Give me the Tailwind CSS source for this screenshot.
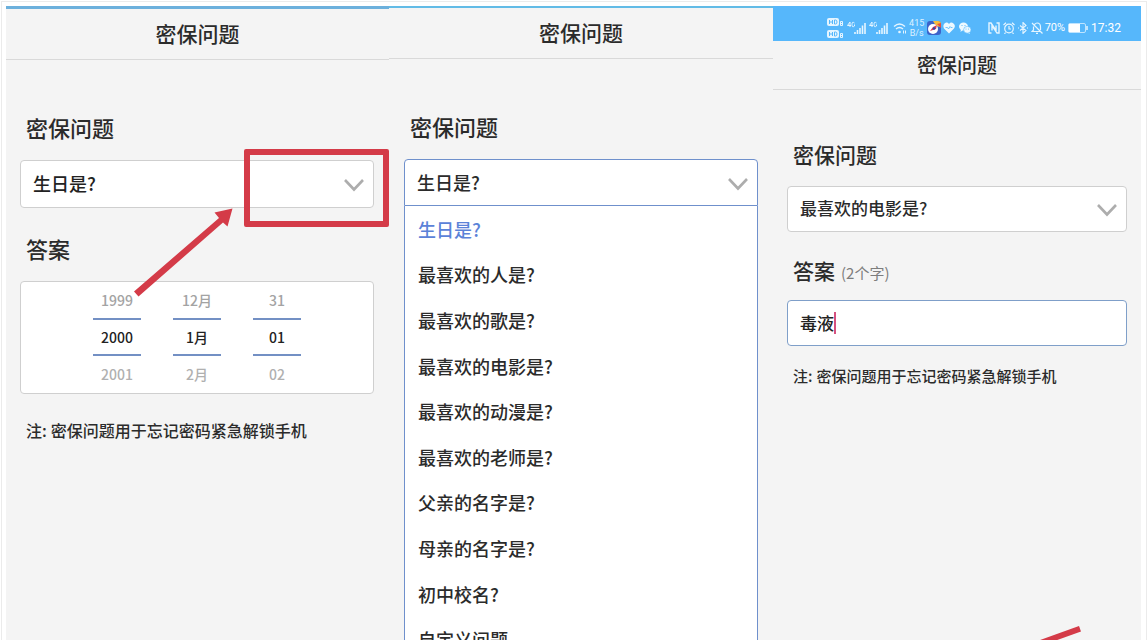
<!DOCTYPE html>
<html lang="zh-CN">
<head>
<meta charset="utf-8">
<meta name="viewport" content="width=device-width, initial-scale=1">
<title>密保问题</title>
<script src="https://cdn.jsdelivr.net/npm/@tailwindcss/browser@4"></script>
</head>
<body class="h-screen overflow-hidden bg-white font-['Noto_Sans_CJK_SC',sans-serif] font-medium text-[#2b2b2b]">
<div class="mx-px mt-px h-full border-x border-t border-[#ebebeb] pt-1 pr-[5px] pl-1">
  <main class="grid h-full grid-cols-[383fr_384fr_368fr] bg-[#f4f4f4]">

    <!-- Step 1: birthday question with date picker -->
    <section class="relative border-t-3 border-[#6cb0dc]">
      <header class="flex h-[51px] items-center justify-center border-b border-[#d9d9d9] pb-0.5">
        <h1 class="text-[21px] leading-8 font-medium">密保问题</h1>
      </header>
      <div class="pr-[15px] pl-3.5">
        <label for="q1" class="mt-[51px] block px-1.5 text-[22px] leading-8">密保问题</label>
        <div class="relative mt-[17px]">
          <select id="q1" class="block h-12 w-full appearance-none rounded-[4px] border border-[#cfcfcf] bg-white px-3 pb-0.5 text-lg text-[#222]"><option>生日是?</option></select>
          <svg class="pointer-events-none absolute top-[18px] right-2.5 h-3.5 w-5" viewBox="0 0 20 14" fill="none" stroke="#adadad" stroke-width="2.6" aria-hidden="true"><path d="M1 2l9 9.5L19 2"/></svg>
        </div>
        <h2 class="mt-6 px-1.5 text-[22px] leading-8 font-medium">答案</h2>
        <div class="mt-[17px] flex h-[113px] items-center justify-center gap-8 rounded-[4px] border border-[#cfcfcf] bg-white pb-0.5 text-center text-sm text-[#a3a3a3]">
          <div class="w-12"><div class="h-9 leading-9">1999</div><div class="h-[38px] border-y-2 border-[#7390c4] leading-[34px] text-[#222]">2000</div><div class="h-9 leading-9 text-[#b0b0b0]">2001</div></div>
          <div class="w-12"><div class="h-9 leading-9">12月</div><div class="h-[38px] border-y-2 border-[#7390c4] leading-[34px] text-[#222]">1月</div><div class="h-9 leading-9 text-[#b0b0b0]">2月</div></div>
          <div class="w-12"><div class="h-9 leading-9">31</div><div class="h-[38px] border-y-2 border-[#7390c4] leading-[34px] text-[#222]">01</div><div class="h-9 leading-9 text-[#b0b0b0]">02</div></div>
        </div>
        <p class="mt-6 px-1.5 text-base leading-6">注:<span class="ml-1">密保问题用于忘记密码紧急解锁手机</span></p>
      </div>
      <!-- Red annotation -->
      <div class="absolute top-[140px] right-0 h-[78px] w-[145px] rounded-[2px] border-6 border-[#d43b48]"></div>
      <svg class="absolute top-[191px] left-[120px] h-[100px] w-[120px]" viewBox="0 0 120 100" fill="#d43b48" aria-hidden="true"><path d="M8 91.500L93 18 88.500 12.500 106.500 8.500 101.500 26.500 97 22.500 12.500 96.500z"/></svg>
    </section>

    <!-- Step 2: question list open -->
    <section class="border-t-2 border-[#62bbe6]">
      <header class="flex h-[51px] items-center justify-center border-b border-[#d9d9d9] pb-0.5">
        <h1 class="text-[21px] leading-8 font-medium">密保问题</h1>
      </header>
      <div class="px-[15px]">
        <label for="q2" class="mt-[51px] block px-1.5 text-[22px] leading-8">密保问题</label>
        <div class="relative mt-[17px]">
          <select id="q2" class="block h-[47px] w-full appearance-none rounded-t-[4px] border border-[#6f90cc] bg-white px-3 pb-0.5 text-lg"><option>生日是?</option></select>
          <svg class="pointer-events-none absolute top-[18px] right-2.5 h-3.5 w-5" viewBox="0 0 20 14" fill="none" stroke="#adadad" stroke-width="2.6" aria-hidden="true"><path d="M1 2l9 9.500L19 2"/></svg>
        </div>
        <ul class="grid h-[456px] auto-rows-fr border-x border-[#6f90cc] bg-white text-lg">
          <li class="flex"><button class="w-full px-[13px] text-left text-[#5b82d8]">生日是?</button></li>
          <li class="flex"><button class="w-full px-[13px] text-left">最喜欢的人是?</button></li>
          <li class="flex"><button class="w-full px-[13px] text-left">最喜欢的歌是?</button></li>
          <li class="flex"><button class="w-full px-[13px] text-left">最喜欢的电影是?</button></li>
          <li class="flex"><button class="w-full px-[13px] text-left">最喜欢的动漫是?</button></li>
          <li class="flex"><button class="w-full px-[13px] text-left">最喜欢的老师是?</button></li>
          <li class="flex"><button class="w-full px-[13px] text-left">父亲的名字是?</button></li>
          <li class="flex"><button class="w-full px-[13px] text-left">母亲的名字是?</button></li>
          <li class="flex"><button class="w-full px-[13px] text-left">初中校名?</button></li>
          <li class="flex"><button class="w-full px-[13px] text-left">自定义问题</button></li>
        </ul>
      </div>
    </section>

    <!-- Step 3: text answer -->
    <section class="relative">
      <div class="flex h-[35px] items-center justify-end bg-[#56b7fb] pt-2 pr-5 text-white">
        <svg class="h-[22px] w-[18px]" viewBox="0 0 18 22" aria-hidden="true"><rect y="1" width="12" height="8" rx="2" fill="#e5f5ff"/><rect y="13" width="12" height="8" rx="2" fill="#e5f5ff"/><g fill="none" stroke="#56b7fb"><path d="M2.500 3v4M5.500 3v4M2.500 5h3M7.500 3v4h1q1.500 0 1.500-2t-1.500-2zM2.500 15v4M5.500 15v4M2.500 17h3M7.500 15v4h1q1.500 0 1.500-2t-1.500-2z"/></g><g fill="none" stroke="#e5f5ff"><path d="M13.500 4.500v4h2v-4zM13.500 6.500h2M13.500 16.500v4h2v-4zM13.500 18.500h2"/></g></svg>
        <svg class="ml-0.5 h-4 w-5" viewBox="0 0 20 16" fill="none" stroke="#e5f5ff" aria-hidden="true"><path d="M3 7V2L.5 5.500H4M7.500 3Q5 1 5 4.500T7.500 6V4.500"/><path stroke-width="1.600" d="M8 14v-2M10.500 14v-4M13 14V8M15.500 14V5.500M18 14V3"/></svg>
        <svg class="ml-0.5 h-4 w-5" viewBox="0 0 20 16" fill="none" stroke="#e5f5ff" aria-hidden="true"><path d="M3 7V2L.5 5.500H4M7.500 3Q5 1 5 4.500T7.500 6V4.500"/><path stroke-width="1.600" d="M8 14v-2M10.500 14v-4M13 14V8M15.500 14V5.500M18 14V3"/></svg>
        <svg class="ml-1 h-3.5 w-3.5" viewBox="0 0 14 14" fill="none" stroke="#e5f5ff" stroke-width="1.400" aria-hidden="true"><path d="M1 5.500q5.500-5 11 0M3 8q3.500-3 7 0"/><circle cx="6.500" cy="11" r="1.300" fill="#e5f5ff" stroke="none"/><path stroke-width="1" d="M10.500 12.500V9.500M12.500 9.500v3"/></svg>
        <div class="ml-0.5 w-4 text-center font-[Roboto,sans-serif] text-[9px] leading-[10px] font-normal text-[#dff2ff]">415<br>B/s</div>
        <svg class="ml-0.5 h-3.5 w-3.5" viewBox="0 0 14 14" aria-hidden="true"><rect width="14" height="14" rx="3" fill="#3c62c9"/><path d="M6 0h5q3 0 3 3v3L9 5z" fill="#f6bd3e"/><path d="M10 3l4-1v5z" fill="#e7503f"/><circle cx="6" cy="8" r="5" fill="#fff"/><path d="M3 10l3-4 4-2-1 4-3 1z" fill="#d93c58"/><circle cx="7" cy="7.500" r="1.300" fill="#294aa9"/></svg>
        <svg class="ml-0.5 h-3 w-3" viewBox="0 0 12 12" aria-hidden="true"><path d="M6 11.500L1 6.500Q-.5 3.500 1.500 1.500 4-.5 6 2 8-.5 10.500 1.500T11 6.500z" fill="#edf9ff"/><path d="M2.500 5.500h2l1 1.500 1.500-2.500 .8 1h1.700" fill="none" stroke="#56b7fb" stroke-width=".8"/></svg>
        <svg class="ml-1 h-3 w-3" viewBox="0 0 12 12" aria-hidden="true"><ellipse cx="4.500" cy="4.500" rx="4.500" ry="4" fill="#edf9ff"/><path d="M1.500 10l.5-3 2 1zM10.500 12l.5-2-2 1z" fill="#edf9ff"/><ellipse cx="8.300" cy="7.800" rx="3.700" ry="3.400" fill="#edf9ff" stroke="#56b7fb" stroke-width=".6"/><g fill="#56b7fb"><circle cx="3" cy="3.500" r=".6"/><circle cx="6" cy="3.500" r=".6"/><circle cx="7" cy="7" r=".5"/><circle cx="9.500" cy="7" r=".5"/></g></svg>
        <svg class="ml-[17px] h-3 w-3" viewBox="0 0 12 12" fill="none" stroke="#e5f5ff" stroke-width="1.400" aria-hidden="true"><path d="M3.500 11H1V1h2l5 7.500V3.500M8.500 1H11v10H9L4 3.500v5"/></svg>
        <svg class="ml-[3px] h-3 w-3" viewBox="0 0 12 12" fill="none" stroke="#e5f5ff" stroke-width="1.200" aria-hidden="true"><circle cx="6" cy="6.500" r="4.300"/><path d="M6 4v3h2M.5 3L3 .8M11.500 3L9 .8M2.500 10.500L1.500 12M9.500 10.500l1 1.500"/></svg>
        <svg class="ml-0.5 h-3 w-3" viewBox="0 0 12 12" fill="none" stroke="#e5f5ff" stroke-width="1.100" aria-hidden="true"><path d="M3 3.500l6 5L6 11.500V.5l3 3-6 5M1 6h1M10 6h1"/></svg>
        <svg class="ml-0.5 h-3 w-3" viewBox="0 0 12 12" fill="none" stroke="#e5f5ff" stroke-width="1.200" aria-hidden="true"><path d="M1 1l10.500 10.500M3.500 2.500Q5 1 6 1q3.500 0 3.500 4v3M2.500 4.500V8L1 9.500h8M5 11.300h2"/></svg>
        <span class="ml-0.5 font-[Roboto,sans-serif] text-[11px] leading-4 font-normal">70%</span>
        <svg class="ml-[3px] h-2.5 w-5" viewBox="0 0 20 10" aria-hidden="true"><rect x=".5" y=".5" width="17" height="9" rx="1.500" fill="none" stroke="#bfe4ff"/><rect x="1" y="1" width="11" height="8" fill="#fff"/><path d="M19 3v4" stroke="#e5f5ff" stroke-width="1.500"/></svg>
        <time class="ml-[3px] font-[Roboto,sans-serif] text-xs leading-4 font-normal">17:32</time>
      </div>
      <header class="flex h-[49px] items-center justify-center border-b border-[#d9d9d9]">
        <h1 class="text-xl leading-8 font-medium">密保问题</h1>
      </header>
      <div class="px-3.5">
        <label for="q3" class="mt-12 block px-1.5 text-[21px] leading-8">密保问题</label>
        <div class="relative mt-4">
          <select id="q3" class="block h-[46px] w-full appearance-none rounded-[4px] border border-[#cfcfcf] bg-white px-3 pb-0.5 text-[17px]"><option>最喜欢的电影是?</option></select>
          <svg class="pointer-events-none absolute top-[17px] right-2.5 h-3.5 w-5" viewBox="0 0 20 14" fill="none" stroke="#adadad" stroke-width="2.600" aria-hidden="true"><path d="M1 2l9 9.500L19 2"/></svg>
        </div>
        <label for="a3" class="mt-[22px] flex items-baseline gap-1.5 px-1.5 text-[21px] leading-8">答案<span class="text-[15px] leading-6 font-normal text-[#7d7d7d]">(2个字)</span></label>
        <div class="relative mt-3.5">
          <input id="a3" type="text" value="毒液" class="block h-[46px] w-full rounded-[4px] border border-[#7f9fc9] bg-white px-3 pb-0.5 text-[17px] text-[#222]">
          <span class="absolute top-3 left-[47px] h-[22px] w-0.5 bg-[#d6517f]"></span>
        </div>
        <p class="mt-[18px] px-1.5 text-[15px] leading-6">注:<span class="ml-1">密保问题用于忘记密码紧急解锁手机</span></p>
      </div>
      <svg class="absolute top-[615px] right-[58px] h-10 w-20" viewBox="0 0 80 40" fill="#d43b48" aria-hidden="true"><path d="M76 5L78 10.500 18 32 16 26.600z"/></svg>
    </section>

  </main>
</div>
</body>
</html>
